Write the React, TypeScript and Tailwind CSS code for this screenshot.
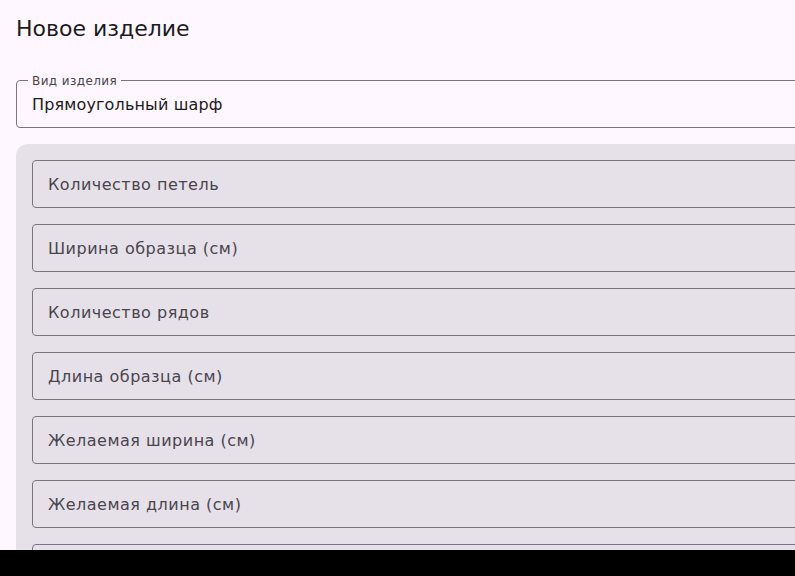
const fields = [
  "Количество петель",
  "Ширина образца (см)",
  "Количество рядов",
  "Длина образца (см)",
  "Желаемая ширина (см)",
  "Желаемая длина (см)",
  "",
];

function PanelField({ label }: { label: string }) {
  return (
    <div className="flex h-12 shrink-0 items-center rounded border border-[#79747e] px-[15px] pt-px">
      <span className="text-base leading-6 tracking-[0.5px] text-[#49454f]">{label}</span>
    </div>
  );
}

export default function App() {
  return (
    <div
      className="flex h-[576px] w-[795px] flex-col overflow-hidden bg-[#fef7ff] text-[#1d1b20]"
      style={{ fontFamily: '"DejaVu Sans", sans-serif' }}
    >
      <div className="flex min-h-0 w-[840px] flex-1 flex-col overflow-hidden px-4">
        <h1 className="pt-[15px] text-[22px] leading-7">Новое изделие</h1>

        <div className="relative mt-[37px] flex h-12 shrink-0 items-center rounded border border-[#79747e] px-[15px] pt-px">
          <span className="absolute -top-[8px] left-[11px] bg-[#fef7ff] px-1 text-xs leading-4 tracking-[0.4px] text-[#49454f]">
            Вид изделия
          </span>
          <span className="text-base leading-6 tracking-[0.15px]">Прямоугольный шарф</span>
        </div>

        <div className="mt-4 flex flex-col gap-4 rounded-tl-xl rounded-tr-xl bg-[#e6e0e9] p-4">
          {fields.map((f, i) => (
            <PanelField key={i} label={f} />
          ))}
        </div>
      </div>
      <div className="h-[26px] shrink-0 bg-black" />
    </div>
  );
}
